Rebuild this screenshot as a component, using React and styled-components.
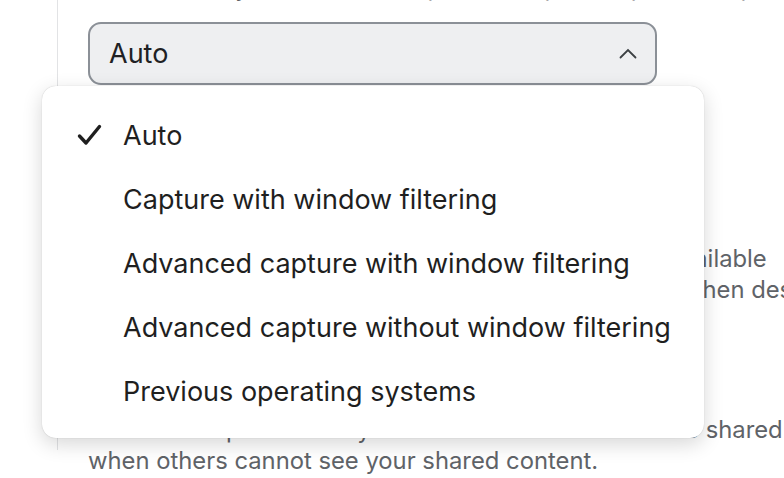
import React from "react";
import styled, { createGlobalStyle } from "styled-components";

const GlobalStyle = createGlobalStyle`
  html, body {
    margin: 0;
    padding: 0;
    background: #ffffff;
  }
  body {
    font-family: Inter, "Noto Sans", "Liberation Sans", sans-serif;
    -webkit-font-smoothing: antialiased;
  }
`;

const Page = styled.div`
  width: 784px;
  height: 478px;
  overflow: hidden;
  padding-left: 57px;
  box-sizing: border-box;
`;

const Panel = styled.div`
  height: 100%;
  border-left: 1px solid #e2e3e5;
  padding-left: 30px;
  box-sizing: border-box;
`;

const Line = styled.div`
  font-size: 23.8px;
  line-height: 31px;
  color: #5f6368;
  white-space: nowrap;
`;

const Intro = styled(Line)`
  margin-top: -28px;
`;

const Field = styled.div`
  position: relative;
  margin-top: 19px;
  width: 569px;
`;

const SelectBox = styled.div`
  height: 63px;
  box-sizing: border-box;
  border: 2px solid #8b9097;
  border-radius: 13px;
  background: #eeeff1;
  display: flex;
  align-items: center;
  justify-content: space-between;
  padding: 0 18px 0 19px;
  font-size: 27px;
  color: #202124;
`;

const Menu = styled.ul`
  position: absolute;
  top: 64px;
  left: -46px;
  width: 662px;
  margin: 0;
  padding: 17px 0 15px;
  list-style: none;
  background: #ffffff;
  border-radius: 14px;
  box-shadow: 0 6px 20px rgba(0, 0, 0, 0.16), 0 0 1px rgba(0, 0, 0, 0.25);
  z-index: 2;
`;

const Item = styled.li`
  height: 64px;
  display: flex;
  align-items: center;
  font-size: 27px;
  color: #1f1f1f;
`;

const CheckSlot = styled.span`
  width: 81px;
  display: flex;
  justify-content: flex-end;
  padding-right: 21px;
  box-sizing: border-box;
`;

const Description = styled.div`
  margin-top: ${(p) => p.$top}px;
`;

const Check = () => (
  <svg width="25" height="22" viewBox="0 0 25 22">
    <path
      d="M2.5 12 L9 19 L22.5 2.5"
      fill="none"
      stroke="#1f1f1f"
      strokeWidth="3.4"
      strokeLinecap="round"
      strokeLinejoin="round"
    />
  </svg>
);

const ChevronUp = () => (
  <svg width="18" height="11" viewBox="0 0 18 11">
    <path d="M1.5 9.5 L9 2 L16.5 9.5" fill="none" stroke="#3c4043" strokeWidth="1.8" strokeLinecap="round" />
  </svg>
);

const options = [
  "Auto",
  "Capture with window filtering",
  "Advanced capture with window filtering",
  "Advanced capture without window filtering",
  "Previous operating systems",
];

export default function App() {
  return (
    <>
      <GlobalStyle />
      <Page>
        <Panel>
          <Intro>Choose how your screen is captured, or pick a specific capture mode</Intro>
          <Field>
            <SelectBox>
              <span>Auto</span>
              <ChevronUp />
            </SelectBox>
            <Menu>
              {options.map((o, i) => (
                <Item key={o}>
                  <CheckSlot>{i === 0 && <Check />}</CheckSlot>
                  {o}
                </Item>
              ))}
            </Menu>
          </Field>
          <Description $top={158}>
            <Line>Select this option when window filtering mode isn't available</Line>
            <Line>on your computer, or your shared screen goes blank when desktop sharing.</Line>
          </Description>
          <Description $top={109}>
            <Line>Select this option when you cannot see content on the shared screen, or</Line>
            <Line>when others cannot see your shared content.</Line>
          </Description>
        </Panel>
      </Page>
    </>
  );
}
